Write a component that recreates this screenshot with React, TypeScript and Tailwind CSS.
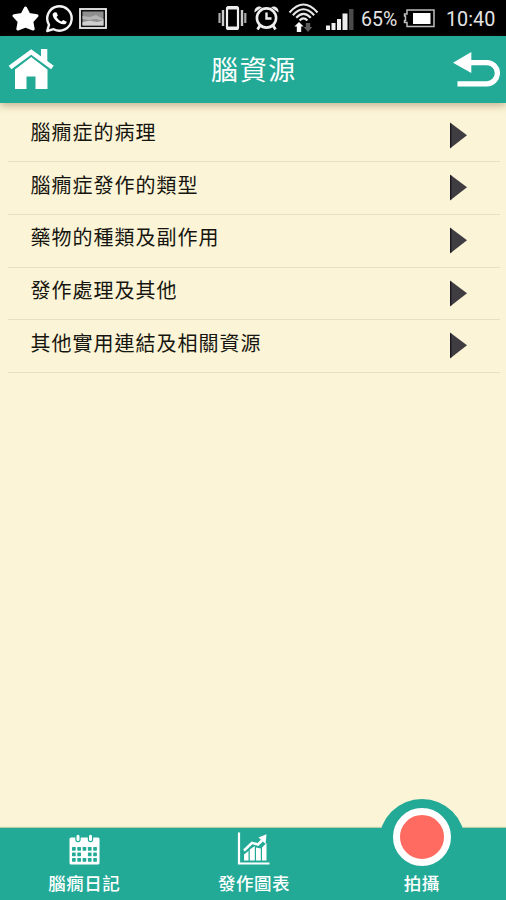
import React from "react";

const CJK = "font-['Roboto','Noto_Sans_CJK_TC',sans-serif]";

const topics = [
  "腦癇症的病理",
  "腦癇症發作的類型",
  "藥物的種類及副作用",
  "發作處理及其他",
  "其他實用連結及相關資源",
];

function StatusBar() {
  return (
    <div className="flex h-9 shrink-0 items-start bg-black font-['Roboto',sans-serif] text-[#e4e4e4]">
      <svg className="ml-3 mt-1.5 shrink-0" width="27" height="26" viewBox="0 0 27 26">
        <path d="M13.5 2 L17 8.6 L25 9.8 L19.8 15.6 L21.2 23 L13.5 20 L5.8 23 L7.2 15.6 L2 9.8 L10 8.6 Z" fill="#fff" stroke="#fff" strokeWidth="3" strokeLinejoin="round" />
      </svg>
      <svg className="ml-1.5 mt-1 shrink-0" width="29" height="29" viewBox="0 0 29 29">
        <path d="M2.2 27 L4 20.8 A12.2 12.2 0 1 1 8.6 25.2 Z" fill="none" stroke="#f4f4f4" strokeWidth="2.4" strokeLinejoin="round" />
        <path d="M9.8 8.2 C8.3 8.5 7.4 10 7.7 11.3 C8.5 15.6 13.4 19.8 18.4 20.3 C20.4 20.5 21.8 19.3 21.6 17.7 L18.3 16 L16.4 17.6 C14.2 16.6 12.4 15 11.5 13.1 L12.9 11.4 L11.6 8.4 Z" fill="#fff" />
      </svg>
      <svg className="ml-[5px] mt-2 shrink-0" width="28" height="21" viewBox="0 0 28 21">
        <rect x="1" y="1" width="26" height="19" fill="#111" stroke="#eee" strokeWidth="1.8" />
        <rect x="3.5" y="3.5" width="21" height="14" fill="#8f8f8f" />
        <path d="M3.5 8 L11 9 L17 7 L24.5 11 V13 L17 11 L10 12 L3.5 11 Z" fill="#b5b5b5" />
        <path d="M3.5 14 L11 12.8 L18 14 L24.5 12.5 V17.5 H3.5 Z" fill="#cfcfcf" />
      </svg>
      <svg className="ml-[111px] mt-[5px] shrink-0" width="30" height="26" viewBox="0 0 30 26">
        <rect x="9" y="2" width="11" height="22" rx="1.5" fill="none" stroke="#f2f2f2" strokeWidth="2.2" />
        <path d="M9 3 H20 M9 23 H20" stroke="#eee" strokeWidth="3" />
        <path d="M5 5 V21 M24 5 V21" stroke="#ccc" strokeWidth="2.4" />
        <path d="M1.5 8 V18 M27.3 8 V18" stroke="#aaa" strokeWidth="2.2" />
      </svg>
      <svg className="ml-[5px] mt-1 shrink-0" width="28" height="27" viewBox="0 0 28 27">
        <circle cx="13.5" cy="14" r="9.6" fill="none" stroke="#eee" strokeWidth="2.6" />
        <path d="M13.5 8.5 V14.5 H18.5" fill="none" stroke="#eee" strokeWidth="2.4" />
        <path d="M1.5 8.5 C1 4 5 1 9 3.2 Z M25.5 8.5 C26 4 22 1 18 3.2 Z" fill="#eee" />
        <path d="M7 21.5 L4.5 25.5 M20 21.5 L22.5 25.5" stroke="#eee" strokeWidth="2.8" />
      </svg>
      <svg className="ml-[7px] mt-[3px] shrink-0" width="31" height="30" viewBox="0 0 31 30">
        <path d="M1.5 9.5 Q15.5 -6.5 29.5 9.5 M4.8 12.3 Q15.5 0.3 26.2 12.3 M8.2 14.8 Q15.5 7 22.8 14.8 M11.6 17.4 Q15.5 13.4 19.4 17.4" fill="none" stroke="#e8e8e8" strokeWidth="2.1" />
        <path d="M11 19 L15.6 23.6 H13.2 V29 H8.8 V23.6 H6.4 Z" fill="#fff" />
        <path d="M20 29 L24.4 24 H22.2 V20 H17.8 V24 H15.6 Z" fill="#5c5c5c" />
      </svg>
      <svg className="ml-[7px] mt-2 shrink-0" width="28" height="23" viewBox="0 0 28 23">
        <path d="M0 17.5 H4 V22 H0 Z M5.5 15 H9.5 V22 H5.5 Z M11 11 H15 V22 H11 Z M16.5 5.5 H21.5 V22 H16.5 Z" fill="#eee" />
        <rect x="23" y="1" width="4.5" height="21" fill="#4b4b4b" />
      </svg>
      <span className="ml-[7px] mt-2 w-10 whitespace-nowrap text-[19.5px] leading-6">65%</span>
      <svg className="mt-[9px] shrink-0" width="35" height="19" viewBox="0 0 35 19">
        <path d="M6 1 H33 V17.5 H6 V13.5 H3.5 V11.5 H4.5 V7 H3.5 V5 H6 Z" fill="none" stroke="#bdbdbd" strokeWidth="1.5" />
        <rect x="12" y="4" width="17.5" height="11" fill="#fff" />
      </svg>
      <span className="ml-[10px] mt-2 whitespace-nowrap text-[19.8px] leading-6">10:40</span>
    </div>
  );
}

function Header() {
  return (
    <header className="z-10 flex h-[67px] shrink-0 items-start justify-between bg-[#22aa97] shadow-[0_2px_8px_rgba(90,65,25,0.4)]">
      <svg className="ml-2 mt-[13px]" width="46" height="41" viewBox="0 0 46 41">
        <path d="M7 20.5 L23.2 8 L39.5 20.5 V40 H27.5 V27.5 H18.5 V40 H7 Z" fill="#fff" />
        <path d="M2 19 L23.2 3.2 L44.4 19" fill="none" stroke="#22aa97" strokeWidth="7.2" />
        <path d="M33 0 H39.3 V14 L33 9.5 Z" fill="#fff" />
        <path d="M2 18.5 L23.2 3 L44.4 18.5" fill="none" stroke="#fff" strokeWidth="4.6" />
      </svg>
      <h1 className="ml-0.5 mt-[15px] text-[27px] font-normal leading-10 tracking-[1.6px] text-white">腦資源</h1>
      <svg className="mr-1.5 mt-4" width="48" height="36" viewBox="0 0 48 36">
        <path d="M1 10.7 L19.3 0 V21 Z" fill="#fff" />
        <path d="M18 10.6 H34.8 A10.6 10.6 0 0 1 34.8 31.8 H5.5" fill="none" stroke="#fff" strokeWidth="5.3" />
      </svg>
    </header>
  );
}

function TopicRow({ label }: { label: string }) {
  return (
    <li className="flex h-[52.7px] items-start justify-between border-b border-[#e9dfc3] pl-[22.5px] pr-[33px]">
      <span className="mt-[7.5px] text-[20px] leading-8 tracking-[1px] text-[#16150f]">{label}</span>
      <svg className="mt-3" width="18" height="27" viewBox="0 0 18 27">
        <path d="M1 0.5 L18 13.3 L1 26.5 Z" fill="#403d42" />
        <path d="M1.7 1.5 V25.5" stroke="#1b1722" strokeWidth="1.4" />
      </svg>
    </li>
  );
}

function CalendarIcon() {
  const cells = [0, 1, 2].flatMap((r) =>
    [0, 1, 2, 3, 4].filter((c) => !(r === 1 && c === 2)).map((c) => [c, r]),
  );
  return (
    <svg width="31" height="31" viewBox="0 0 31 31">
      <rect x="0.5" y="3.5" width="30" height="27" rx="1.5" fill="#fff" />
      <path d="M9 2.2 V5.5 M21.5 2.2 V5.5" stroke="#22aa97" strokeWidth="5.4" strokeLinecap="round" />
      <path d="M9 2.2 V5.5 M21.5 2.2 V5.5" stroke="#fff" strokeWidth="3" strokeLinecap="round" />
      {cells.map(([c, r]) => (
        <rect key={`${c}-${r}`} x={3 + c * 5.3} y={13 + r * 5.5} width="3.7" height="3.7" rx="0.6" fill="#22aa97" />
      ))}
    </svg>
  );
}

function ChartIcon() {
  return (
    <svg width="33" height="34" viewBox="0 0 33 34">
      <path d="M2 0.5 V31.5 H32.5" fill="none" stroke="#fff" strokeWidth="2.2" />
      <path d="M7 22.5 L11.5 19 V28.5 H7 Z M12.8 17.5 L17.8 14 V28.5 H12.8 Z M19 15.5 L23.8 16.5 V28.5 H19 Z M25 15.5 L29.5 11 V28.5 H25 Z" fill="#fff" />
      <path d="M7 18.5 L15 10.8 L21 12.5 L27 6.5" fill="none" stroke="#fff" strokeWidth="2.5" />
      <path d="M21.5 5.5 L29.5 2.3 L28.6 12 Z" fill="#fff" />
    </svg>
  );
}

function BottomBar() {
  const label = "whitespace-nowrap text-[17.5px] font-medium leading-6 tracking-[0.5px] text-white";
  return (
    <nav className="relative grid h-[72.5px] shrink-0 grid-cols-3 bg-[#22aa97] shadow-[0_-1px_1px_#b7cfaa]">
      <div className="absolute left-[379px] top-[-29px] size-[86px] rounded-full bg-[#22aa97]" />
      <div className="flex flex-col items-center pt-1.5">
        <CalendarIcon />
        <span className={`mt-[7.5px] ${label}`}>腦癇日記</span>
      </div>
      <div className="flex flex-col items-center pl-0.5 pt-1">
        <ChartIcon />
        <span className={`mt-[6.5px] ${label}`}>發作圖表</span>
      </div>
      <div className="relative flex flex-col items-center">
        <div className="-mt-5 size-[58px] shrink-0 rounded-full border-[7px] border-white bg-[#ff6b60]" />
        <span className={`mt-[6.5px] ${label}`}>拍攝</span>
      </div>
    </nav>
  );
}

export default function App() {
  return (
    <div lang="zh-Hant" className={`flex h-[900px] w-[506px] flex-col overflow-hidden bg-[#fbf4d6] ${CJK}`}>
      <StatusBar />
      <Header />
      <main className="flex-1 px-2 pt-[6.5px]">
        <ul className="-mr-0.5">
          {topics.map((topic) => (
            <TopicRow key={topic} label={topic} />
          ))}
        </ul>
      </main>
      <BottomBar />
    </div>
  );
}
